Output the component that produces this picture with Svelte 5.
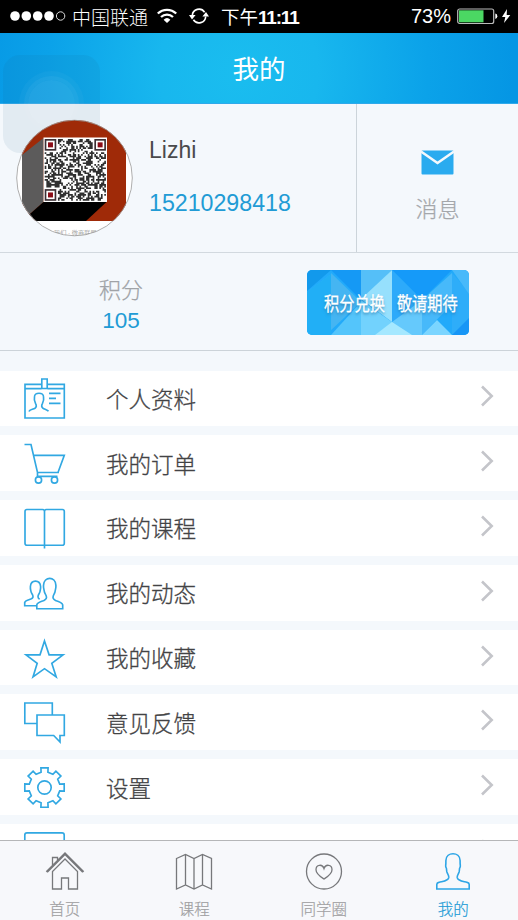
<script>
  const menu = [
    { label: '个人资料', icon: 'card' },
    { label: '我的订单', icon: 'cart' },
    { label: '我的课程', icon: 'book' },
    { label: '我的动态', icon: 'people' },
    { label: '我的收藏', icon: 'star' },
    { label: '意见反馈', icon: 'chat' },
    { label: '设置', icon: 'gear' },
    { label: '', icon: 'more' }
  ];
  const tabs = [
    { label: '首页', icon: 'home' },
    { label: '课程', icon: 'map' },
    { label: '同学圈', icon: 'heart' },
    { label: '我的', icon: 'me' }
  ];

  // QR modules: a fixed pseudo-random field with three finder squares left free
  const N = 37;
  let seed = 20483;
  let qr = '';
  for (let y = 0; y < N; y++) {
    for (let x = 0; x < N; x++) {
      seed = (seed * 1103515245 + 12345) % 2147483648;
      const finder = (x < 8 && y < 8) || (x > N - 9 && y < 8) || (x < 8 && y > N - 9);
      if (!finder && (seed >> 12) % 100 < 52) qr += `M${x} ${y}h1v1h-1z`;
    }
  }
  const finders = [[0, 0], [N - 7, 0], [0, N - 7]];

  // gear outline: eight teeth around the centre
  let gear = '';
  for (let i = 0; i < 8; i++) {
    const a = (i * Math.PI) / 4 - Math.PI / 2;
    for (const [r, d] of [[15.6, -0.22], [20, -0.18], [20, 0.18], [15.6, 0.22]]) {
      gear += `${(44.5 + r * Math.cos(a + d)).toFixed(1)},${(28.5 + r * Math.sin(a + d)).toFixed(1)} `;
    }
  }
</script>

<div class="screen">
  <div class="status">
    <svg class="dots" width="56" height="14" viewBox="0 0 56 14">
      {#each [5, 16.3, 27.7, 39] as cx}<circle {cx} cy="7" r="4.8" fill="#fff" />{/each}
      <circle cx="50.6" cy="7" r="4.2" fill="none" stroke="#ddd" />
    </svg>
    <span class="carrier">中国联通</span>
    <svg class="wifi" width="20" height="16" viewBox="0 0 20 16">
      <path d="M.8 5.5a13.3 13.3 0 0 1 18.4 0M4 9a8.7 8.7 0 0 1 12 0" fill="none" stroke="#fff" stroke-width="2.3" />
      <path d="M10 15 6.6 11.7a5 5 0 0 1 6.8 0z" fill="#fff" />
    </svg>
    <svg class="sync" width="20" height="16" viewBox="0 0 20 16">
      <path d="M3.3 7.5a6.7 6.7 0 0 1 12.3-3.3M16.7 8.500a6.700 6.700 0 0 1-12.300 3.300" fill="none" stroke="#fff" stroke-width="1.6" />
      <path d="M0 7h6.600L3 11.500zM20 8.500h-6.600L17 4z" fill="#fff" />
    </svg>
    <span class="time">下午<b>11:11</b></span>
    <span class="percent">73%</span>
    <svg class="battery" width="54" height="17" viewBox="0 0 54 17">
      <rect x=".7" y="1" width="36" height="14.500" rx="2" fill="none" stroke="#bbb" stroke-width="1.200" />
      <rect x="2" y="2.300" width="24.500" height="12" fill="#4bd763" />
      <path d="M38.300 5.500q2 .3 2 2.700t-2 2.700z" fill="#fff" />
      <path d="M50 1 45 9h3.300l-1.300 6 6.300-8h-3.600z" fill="#fff" />
    </svg>
  </div>

  <header>我的</header>

  <section class="profile">
    <svg class="avatar" width="118" height="118" viewBox="15 119 118 118">
      <defs><clipPath id="round"><circle cx="74.500" cy="178" r="58" /></clipPath></defs>
      <g clip-path="url(#round)">
        <path d="M15 119h118v118H15z" fill="#fff" />
        <path d="M22 119h104v102H22z" fill="#9f2a08" />
        <path d="M22 155 43.500 138v64L22 221z" fill="#5c5b5b" />
        <path d="M22 221 43.500 202h63L86 221z" fill="#000" />
        <text x="54" y="235" font-size="6.200" fill="#777">我们 · 微商联盟</text>
      </g>
      <rect x="43.500" y="137.500" width="63.500" height="64.500" fill="#fff" />
      <g transform="translate(44.700 139) scale(1.655 1.670)">
        <path d={qr} fill="#303030" />
        {#each finders as [x, y]}
          <rect x={x + 0.5} y={y + 0.5} width="6" height="6" fill="#fff" stroke="#3d3035" />
          <rect x={x + 2} y={y + 2} width="3" height="3" fill="#8b0d17" />
        {/each}
      </g>
      <circle cx="74.500" cy="178" r="57.800" fill="none" stroke="#999" stroke-width=".8" />
    </svg>
    <div class="who">
      <div class="name">Lizhi</div>
      <div class="phone">15210298418</div>
    </div>
    <div class="messages">
      <svg width="33" height="25" viewBox="0 0 33 25">
        <rect x=".5" y=".5" width="32" height="24" rx="1" fill="#2aabef" />
        <path d="M0 1.500 16.500 13 33 1.500" fill="none" stroke="#f4f9fd" stroke-width="2.600" />
      </svg>
      <span>消息</span>
    </div>
  </section>

  <section class="points">
    <div class="score"><span class="caption">积分</span><span class="value">105</span></div>
    <div class="banner">
      <svg width="162" height="65" viewBox="0 0 162 65">
        <path d="M0 0h162v65H0z" fill="#22aafa" />
        <path d="M0 0h24L0 21z" fill="#1299ec" /><path d="M24 4 54 32 24 60 0 40V22z" fill="#30b5f4" />
        <path d="M24 4v61H0V22z" fill="#21aff6" />
        <path d="M24 0h30v30z" fill="#1599f5" /><path d="M24 3 54 32 24 60z" fill="#45b5f2" />
        <path d="M54 0h31L54 30z" fill="#55bff8" /><path d="M85 0v52L54 29z" fill="#96e0fd" />
        <path d="M54 30v35h31V52z" fill="#72d2fd" /><path d="M24 65 54 32v33z" fill="#54c5fb" />
        <path d="M85 0h60l-30 30z" fill="#159af9" /><path d="m85 0 30 30-30 28z" fill="#2daafa" />
        <path d="m115 30 30-27v31l-30 31z" fill="#47b9fa" /><path d="m85 52 30-22v35H85z" fill="#65c9fc" />
        <path d="m68 65 17-13 20 13z" fill="#a5e8ff" /><path d="M145 3v62h17V22z" fill="#2eadf9" />
        <path d="M145 0h17v24z" fill="#48b9fa" /><path d="m145 65 17-17v17z" fill="#1796f6" />
        <path d="m115 65 15-15 15 15z" fill="#7bd5ff" />
      </svg>
      <span class="promo"><span>积分兑换</span><span>敬请期待</span></span>
    </div>
  </section>

  <main>
    {#each menu as item}
      <div class="row">
        <svg class="icon" width="90" height="56" viewBox="0 0 90 56">
          {#if item.icon === 'card'}
            <path d="M41.500 14.300H25V48h39.300V14.300H47.500M25 18.600h16.500m6 0h16.800M41.800 9h5.400v9.500h-5.400zM49 23.300h11.500M49 28.300h7M49 33.300h11.500" />
            <path d="M29 41.500c.5-2 4-2 6-3.300 2-1.400 1.500-3 .5-4.800-1.200-2.500-1.400-5-1-7 .6-4.200 8.400-4.200 9 0 .4 2 .2 4.500-1 7-1 1.800-1.500 3.400.5 4.800 1.500 1 4.500 1.400 5.500 3" />
          {:else if item.icon === 'cart'}
            <path d="M24.500 9.500H31l6.500 28H59M33.500 20.300h30.800L58 37.500M37.500 37.500v3.800h20" />
            <circle cx="38.500" cy="45" r="3.100" /><circle cx="54.500" cy="45" r="3.100" />
          {:else if item.icon === 'book'}
            <path d="M44.500 48.500V11.500q0-2-2-2H27q-2 0-2 2v31.700q0 2 2 2h35.300q2 0 2-2V11.500q0-2-2-2H46.500q-2 0-2 2" />
          {:else if item.icon === 'people'}
            <path d="M36.500 40.700H24.700v-3.200c.6-3.200 8.300-2.300 8.300-5.800 0-2.400-1.700-3.200-2-5.200-.5-2.200-.8-3-.6-5 .5-7.200 9.600-7.200 10.200 0 .2 2-.2 2.800-.6 5-.3 2-2 2.800-2 5.200 0 1.500.8 2 1.600 2.500" />
            <path d="M36.800 43.700v-3.800c.8-4.200 9.700-3.100 9.700-7.500 0-2.600-1.900-3.600-2.200-6-.4-2.700-1-3.300-.8-6 .5-9.300 12-9.300 12.400 0 .2 2.700-.4 3.300-.8 6-.3 2.400-2.100 3.400-2.100 6 0 4.400 8.800 3.300 9.700 7.500v3.800z" />
          {:else if item.icon === 'star'}
            <path d="m44.500 11 4.600 13.800h14l-11.300 8.500 4.400 13.700-11.700-8.300L33 47l4.200-13.700L26 24.800h14z" />
          {:else if item.icon === 'chat'}
            <path d="M37 29.500H24.800V9h27.500v12M37 21h27.300v20.500H60V48l-6.300-6.500H37z" />
          {:else if item.icon === 'gear'}
            <polygon points={gear} /><circle cx="44.500" cy="28.500" r="6.700" />
          {:else}
            <path d="M24.800 30V11q0-2.200 2.200-2.200h35q2.200 0 2.200 2.200v20" />
          {/if}
        </svg>
        <span class="label">{item.label}</span>
        <svg class="chevron" width="16" height="24" viewBox="0 0 16 24"><path d="m2 2.500 9.700 9.500L2 21.500" /></svg>
      </div>
    {/each}
  </main>

  <nav>
    {#each tabs as tab}
      <div class="tab" class:active={tab.icon === 'me'}>
        <svg width="40" height="40" viewBox="0 0 40 40">
          {#if tab.icon === 'home'}
            <path d="M2.500 21 20 3.500 37.500 21M2.500 21 1.700 20.200 20 2l18.300 18.200-.8.800M20 8 7.500 20.500V38h9V27h7v11h9V20.500zM7.500 14V6.500h5V9" />
          {:else if tab.icon === 'map'}
            <path d="m2.500 7.500 9-4 8.500 4 8.500-4 9 4V38l-9-4-8.500 4-8.500-4-9 4zM11.500 3.500V34M20 7.500V38M28.500 3.500V34" />
          {:else if tab.icon === 'heart'}
            <circle cx="20" cy="20.500" r="17.500" />
            <path d="M20 28c-3-2-8-5-8-9.300 0-5.400 6.500-6 8-1.200 1.500-4.800 8-4.200 8 1.200C28 23 23 26 20 28z" />
          {:else}
            <path d="M3.800 38v-4.500c0-1.300.8-1.800 2-2.100 4-1.100 9.600-1.200 10-5 .1-2.300-1.200-3.200-1.900-5.400-.5-2-.2-2.800-.6-3.900-.7-1-.8-1.500-.6-3.100.3-1.400.1-2 .2-4.500.3-9 13.900-9 14.200 0 .1 2.500-.1 3.100.2 4.500.2 1.600.1 2.100-.6 3.100-.4 1.100-.1 1.900-.6 3.900-.7 2.200-2 3.100-1.900 5.400.4 3.800 6 3.900 10 5 1.200.3 2 .8 2 2.100V38z" />
          {/if}
        </svg>
        <span>{tab.label}</span>
      </div>
    {/each}
  </nav>

  <div class="assistive"><i></i></div>
</div>

<style>
  :global(body) { margin: 0; }
  .screen {
    position: relative; width: 518px; height: 920px; overflow: hidden;
    display: flex; flex-direction: column; background: #f4f8fc;
    font-family: "Liberation Sans", "Noto Sans CJK SC", sans-serif; font-weight: 300;
  }
  svg { display: block; flex: none; }
  .status { height: 32.500px; flex: none; background: #000; color: #fff; display: flex; align-items: center; font-size: 19px; white-space: nowrap; }
  .dots { margin-left: 10px; }
  .carrier { margin-left: 6px; width: 77px; }
  .wifi { margin-left: 8px; }
  .sync { margin-left: 12px; }
  .time { margin-left: 12px; width: 79px; font-size: 18.500px; font-weight: 400; }
  .time b { font-size: 19px; font-weight: 700; letter-spacing: -1.200px; }
  .percent { margin-left: auto; font-size: 20px; }
  .battery { margin: 0 7px 0 6px; }
  header {
    height: 71px; flex: none; box-sizing: border-box; display: flex; align-items: center; justify-content: center;
    color: #fff; font-size: 26.500px; font-weight: 400; border-bottom: 1px solid #2fa9ea;
    background: radial-gradient(circle at 46% 55%, #1abdef 0, #18b7ee 80px, #0ba2e9 190px, #0596e4 275px);
  }
  .profile { height: 149.500px; flex: none; box-sizing: border-box; border-bottom: 1px solid #d2d9df; display: flex; }
  .avatar { margin: 15.500px 0 0 15px; position: relative; z-index: 2; }
  .who { width: 207px; margin-left: 16px; color: #4a4a4c; font-size: 23px; line-height: 30px; }
  .name { margin-top: 31px; }
  .phone { margin-top: 23px; color: #219bd5; font-size: 23.200px; }
  .messages { flex: 1; border-left: 1px solid #ccd4da; display: flex; flex-direction: column; align-items: center; color: #a4a7ab; font-size: 22px; }
  .messages svg { margin-top: 46px; }
  .messages span { line-height: 30px; margin-top: 20px; -webkit-text-stroke: .25px; }
  .points { height: 98px; flex: none; box-sizing: border-box; border-bottom: 1px solid #ccd3d9; display: flex; }
  .score { width: 242px; display: flex; flex-direction: column; align-items: center; font-size: 22px; line-height: 30px; padding-top: 23px; }
  .caption { color: #a0a3a7; -webkit-text-stroke: .25px; }
  .value { color: #219bd5; font-size: 22.500px; }
  .banner { margin: 16.500px 0 0 65px; width: 162px; height: 65px; border-radius: 5px; overflow: hidden; display: grid; }
  .banner svg, .promo { grid-area: 1 / 1; }
  .promo { display: flex; justify-content: center; align-items: center; gap: 15px; z-index: 1; color: #fff; font-size: 19px; font-weight: 400; -webkit-text-stroke: .3px; text-shadow: 0 2px 3px #246b9cb0; white-space: nowrap; transform: scaleX(.8); padding-right: 4px; }
  main { flex: 1; min-height: 0; overflow: hidden; padding-top: 19.500px; }
  .row { height: 55.800px; margin-bottom: 9px; background: #fff; display: flex; align-items: center; }
  .icon { fill: none; stroke: #31a8e2; stroke-width: 1.650; }
  .label { flex: 1; margin-left: 16px; padding-top: 5px; font-size: 22.500px; color: #434345; line-height: 30px; -webkit-text-stroke: .3px; }
  .chevron { margin: 0 22px 4px 0; fill: none; stroke: #c4c5ca; stroke-width: 2.600; }
  nav { height: 80px; flex: none; box-sizing: border-box; border-top: 1px solid #b5b6b8; background: #f7f8fb; display: flex; }
  .tab { width: 129.500px; display: flex; flex-direction: column; align-items: center; color: #a0a0a2; font-size: 15.500px; line-height: 22px; }
  .tab svg { margin-top: 10px; fill: none; stroke: #77787b; stroke-width: 1.300; }
  .tab span { margin-top: 8px; -webkit-text-stroke: .2px; }
  .tab.active { color: #229bd6; }
  .tab.active svg { stroke: #2da5e6; stroke-width: 1.600; }
  .assistive { position: absolute; z-index: 1; left: 3px; top: 55px; width: 97px; height: 98px; border-radius: 17px; background: #14547e14; }
  .assistive i { position: absolute; left: 25px; top: 25px; width: 47px; height: 47px; border-radius: 50%; background: #ffffff18; box-shadow: 0 0 0 4px #ffffff0b, 0 0 0 9px #ffffff08; }
</style>
